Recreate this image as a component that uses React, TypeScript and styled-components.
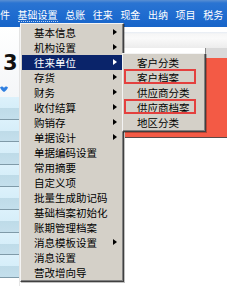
import React from 'react';
import styled, { createGlobalStyle } from 'styled-components';

const GlobalStyle = createGlobalStyle`
  html, body {
    margin: 0;
    padding: 0;
    background: #fff;
  }
  body {
    font-family: "Noto Sans CJK SC", "Noto Sans", sans-serif;
  }
`;

const Screen = styled.div`
  position: relative;
  width: 227px;
  height: 286px;
  overflow: hidden;
  background: #fff;
`;

const MenuBar = styled.div`
  height: 27px;
  box-sizing: border-box;
  padding-top: 5px;
  display: flex;
  align-items: center;
  gap: 7.6px;
  background: linear-gradient(#5a8fd2 0, #2a74d2 3px, #1f6cd0 55%, #1764c8 100%);
  color: #fff;
  font-size: 10px;
  line-height: 1;
  white-space: nowrap;
`;

const MenuTitle = styled.span<{ $open?: boolean }>`
  padding-bottom: 1px;
  border-bottom: 1px dotted ${(p) => (p.$open ? 'rgba(255,255,255,0.7)' : 'transparent')};
`;

const Workspace = styled.div`
  display: flex;
  height: 259px;
`;

const SideStrip = styled.div`
  width: 19px;
  display: flex;
  flex-direction: column;
  border-right: 1px solid #e4e4e4;
`;

const Brand = styled.div`
  height: 70px;
  box-sizing: border-box;
  padding-top: 26px;
  display: flex;
  flex-direction: column;
  align-items: flex-start;
  background: linear-gradient(#fff, #f4f6f8);
`;

const BrandDigit = styled.span`
  font-family: "DejaVu Sans", sans-serif;
  font-weight: 900;
  font-size: 21px;
  line-height: 20px;
  color: #111;
  margin-left: 3px;
`;

const BrandMark = styled.svg`
  margin-top: 13px;
  margin-left: 0;
`;

const Stripe = styled.div`
  height: 22.6px;
  box-sizing: border-box;
  background: linear-gradient(#dcf1fb 0, #d6eef9 50%, #bedbe8 50%, #c4dfec 100%);
  border-bottom: 1px solid #7f9aa8;
`;

const Canvas = styled.div`
  flex: 1;
  display: flex;
  flex-direction: column;
`;

const HeadBand = styled.div`
  height: 21px;
  box-sizing: border-box;
  border-top: 5px solid #fff;
  background: linear-gradient(#e6ecf4 0, #f6f6f6 2px, #fafafa 40%, #ececec 100%);
`;

const TabRow = styled.div`
  height: 10px;
  display: flex;
  justify-content: flex-end;
`;

const GrayTab = styled.div`
  width: 21px;
  background: #d9d9d9;
  border-left: 1px solid #8a8a8a;
`;

const RedPanel = styled.div`
  margin-left: 105px;
  height: 79px;
  background: #f35a45;
  border-bottom: 1px solid #5a4a48;
`;

const Dropdown = styled.div<{ $left: number; $top: number; $width: number }>`
  position: absolute;
  left: ${(p) => p.$left}px;
  top: ${(p) => p.$top}px;
  width: ${(p) => p.$width}px;
  box-sizing: border-box;
  padding: 1px;
  background: #d4d0c8;
  border: 1px solid;
  border-color: #f4f4f4 #404040 #404040 #f4f4f4;
  box-shadow: inset -1px -1px 0 #808080, 1px 1px 0 rgba(0, 0, 0, 0.25);
  font-size: 10.5px;
  color: #000;
`;

const Item = styled.div<{ $active?: boolean; $pad: number }>`
  position: relative;
  height: 15px;
  line-height: 15px;
  padding-left: ${(p) => p.$pad}px;
  white-space: nowrap;
  background: ${(p) => (p.$active ? '#0a246a' : 'transparent')};
  color: ${(p) => (p.$active ? '#fff' : '#000')};
`;

const Arrow = styled.span<{ $active?: boolean }>`
  position: absolute;
  right: 5px;
  top: 4px;
  width: 0;
  height: 0;
  border-top: 3.5px solid transparent;
  border-bottom: 3.5px solid transparent;
  border-left: 4px solid ${(p) => (p.$active ? '#fff' : '#000')};
`;

const Marker = styled.span`
  position: absolute;
  left: 0;
  top: -1.5px;
  width: 72px;
  height: 15px;
  box-sizing: border-box;
  border: 2px solid #e4403e;
`;

const topMenus = ['件', '基础设置', '总账', '往来', '现金', '出纳', '项目', '税务'];

const mainItems: { label: string; sub?: boolean }[] = [
  { label: '基本信息', sub: true },
  { label: '机构设置', sub: true },
  { label: '往来单位', sub: true },
  { label: '存货', sub: true },
  { label: '财务', sub: true },
  { label: '收付结算', sub: true },
  { label: '购销存', sub: true },
  { label: '单据设计', sub: true },
  { label: '单据编码设置' },
  { label: '常用摘要' },
  { label: '自定义项' },
  { label: '批量生成助记码' },
  { label: '基础档案初始化' },
  { label: '账期管理档案' },
  { label: '消息模板设置', sub: true },
  { label: '消息设置' },
  { label: '营改增向导' },
];

const subItems: { label: string; marked?: boolean }[] = [
  { label: '客户分类' },
  { label: '客户档案', marked: true },
  { label: '供应商分类' },
  { label: '供应商档案', marked: true },
  { label: '地区分类' },
];

export default function App() {
  return (
    <>
      <GlobalStyle />
      <Screen>
        <MenuBar>
          {topMenus.map((m) => (
            <MenuTitle key={m} $open={m === '基础设置'}>
              {m}
            </MenuTitle>
          ))}
        </MenuBar>
        <Workspace>
          <SideStrip>
            <Brand>
              <BrandDigit>3</BrandDigit>
              <BrandMark width="8" height="6" viewBox="0 0 8 6">
                <path d="M0 1.5 C1.5 0 3 0.5 4 2 C5 0.5 6.5 0 8 1.5 C7 4 5.5 5 4 6 C2.5 5 1 4 0 1.5 Z" fill="#2f7fe0" />
              </BrandMark>
            </Brand>
            {Array.from({ length: 8 }).map((_, i) => (
              <Stripe key={i} />
            ))}
          </SideStrip>
          <Canvas>
            <HeadBand />
            <TabRow>
              <GrayTab />
            </TabRow>
            <RedPanel />
          </Canvas>
        </Workspace>

        <Dropdown $left={20} $top={23} $width={104}>
          {mainItems.map((it) => (
            <Item key={it.label} $pad={12} $active={it.label === '往来单位'}>
              {it.label}
              {it.sub && <Arrow $active={it.label === '往来单位'} />}
            </Item>
          ))}
        </Dropdown>

        <Dropdown $left={122} $top={53} $width={84}>
          {subItems.map((it) => (
            <Item key={it.label} $pad={13}>
              {it.label}
              {it.marked && <Marker />}
            </Item>
          ))}
        </Dropdown>
      </Screen>
    </>
  );
}
